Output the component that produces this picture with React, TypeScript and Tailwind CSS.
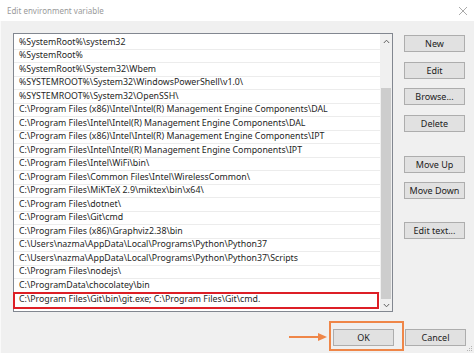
import React from "react";

const paths = [
  "%SystemRoot%\\system32",
  "%SystemRoot%",
  "%SystemRoot%\\System32\\Wbem",
  "%SYSTEMROOT%\\System32\\WindowsPowerShell\\v1.0\\",
  "%SYSTEMROOT%\\System32\\OpenSSH\\",
  "C:\\Program Files (x86)\\Intel\\Intel(R) Management Engine Components\\DAL",
  "C:\\Program Files\\Intel\\Intel(R) Management Engine Components\\DAL",
  "C:\\Program Files (x86)\\Intel\\Intel(R) Management Engine Components\\IPT",
  "C:\\Program Files\\Intel\\Intel(R) Management Engine Components\\IPT",
  "C:\\Program Files\\Intel\\WiFi\\bin\\",
  "C:\\Program Files\\Common Files\\Intel\\WirelessCommon\\",
  "C:\\Program Files\\MiKTeX 2.9\\miktex\\bin\\x64\\",
  "C:\\Program Files\\dotnet\\",
  "C:\\Program Files\\Git\\cmd",
  "C:\\Program Files (x86)\\Graphviz2.38\\bin",
  "C:\\Users\\nazma\\AppData\\Local\\Programs\\Python\\Python37",
  "C:\\Users\\nazma\\AppData\\Local\\Programs\\Python\\Python37\\Scripts",
  "C:\\Program Files\\nodejs\\",
  "C:\\ProgramData\\chocolatey\\bin",
];

function Btn({ label, className = "" }: { label: string; className?: string }) {
  return (
    <div
      className={`h-[17px] w-[61px] flex items-center justify-center border border-[#adadad] bg-[#e1e1e1] text-[9px] text-[#222] ${className}`}
    >
      {label}
    </div>
  );
}

export default function App() {
  return (
    <div
      className="w-[474px] h-[355px] flex flex-col bg-white overflow-hidden"
      style={{ fontFamily: '"Noto Sans", "Open Sans", sans-serif' }}
    >
      {/* Title bar */}
      <div className="h-[21px] flex items-center justify-between pl-[7px] pr-[6px] bg-white">
        <span className="text-[8px] text-[#9a9a9a]">Edit environment variable</span>
        <svg width="10" height="10" viewBox="0 0 10 10">
          <path d="M1 1 L9 9 M9 1 L1 9" stroke="#a0a0a0" strokeWidth="0.9" />
        </svg>
      </div>

      {/* Body */}
      <div className="relative h-[332px] bg-[#f0f0f0] border-l border-[#fafafa] pl-[12px] pt-[12px]">
        <div className="flex">
          {/* List */}
          <div className="w-[380px] h-[279px] flex border border-[#828790] bg-white">
            <div className="flex-1 pt-[2px]">
              {paths.map((p) => (
                <div
                  key={p}
                  className="h-[13.5px] flex items-center pl-[5px] border-b border-[#ececec] text-[8.8px] leading-none text-[#1e1e1e] whitespace-nowrap"
                >
                  {p}
                </div>
              ))}
              <div className="relative h-[13.5px] flex items-center pl-[5px] text-[8.8px] leading-none text-[#1e1e1e] whitespace-nowrap">
                C:\Program Files\Git\bin\git.exe; C:\Program Files\Git\cmd.
                <span className="absolute left-[-1px] right-[1px] top-[-1px] bottom-[-3px] border-2 border-[#dd1f26]" />
              </div>
            </div>
            {/* Scrollbar */}
            <div className="w-[12px] flex flex-col bg-[#f0f0f0]">
              <div className="h-[14px] flex items-center justify-center">
                <svg width="7" height="5" viewBox="0 0 7 5">
                  <path d="M0.8 4 L3.5 1.2 L6.2 4" fill="none" stroke="#606060" strokeWidth="1" />
                </svg>
              </div>
              <div className="flex-1 flex flex-col pt-[40px] px-[1px]">
                <div className="flex-1 bg-[#cdcdcd]" />
              </div>
              <div className="h-[12px] flex items-center justify-center">
                <svg width="7" height="5" viewBox="0 0 7 5">
                  <path d="M0.8 1 L3.5 3.8 L6.2 1" fill="none" stroke="#606060" strokeWidth="1" />
                </svg>
              </div>
            </div>
          </div>

          {/* Side buttons */}
          <div className="ml-[11px] flex flex-col pt-[2px]">
            <Btn label="New" />
            <Btn label="Edit" className="mt-[10px]" />
            <Btn label="Browse..." className="mt-[9px]" />
            <Btn label="Delete" className="mt-[10px]" />
            <Btn label="Move Up" className="mt-[24px]" />
            <Btn label="Move Down" className="mt-[9px]" />
            <Btn label="Edit text..." className="mt-[23px]" />
          </div>
        </div>

        {/* Bottom buttons */}
        <div className="flex justify-end gap-[11px] pr-[8px] mt-[17px]">
          <Btn label="OK" />
          <Btn label="Cancel" className="w-[57px]" />
        </div>

        {/* Orange highlight + arrow annotation */}
        <div className="absolute left-[328px] top-[300px] w-[75px] h-[30px] border-2 border-[#ef8648]" />
        <svg className="absolute left-[287px] top-[311px]" width="40" height="10" viewBox="0 0 40 10">
          <path d="M1 5 L32 5" stroke="#ef8648" strokeWidth="2" />
          <path d="M30 1 L39 5 L30 9 Z" fill="#ef8648" />
        </svg>

        {/* Resize grip */}
        <svg className="absolute right-[1px] bottom-[1px]" width="8" height="8" viewBox="0 0 8 8">
          <rect x="6" y="2" width="1" height="1" fill="#b5b5b5" />
          <rect x="4" y="4" width="1" height="1" fill="#b5b5b5" />
          <rect x="6" y="4" width="1" height="1" fill="#b5b5b5" />
          <rect x="2" y="6" width="1" height="1" fill="#b5b5b5" />
          <rect x="4" y="6" width="1" height="1" fill="#b5b5b5" />
          <rect x="6" y="6" width="1" height="1" fill="#b5b5b5" />
        </svg>
      </div>
    </div>
  );
}
